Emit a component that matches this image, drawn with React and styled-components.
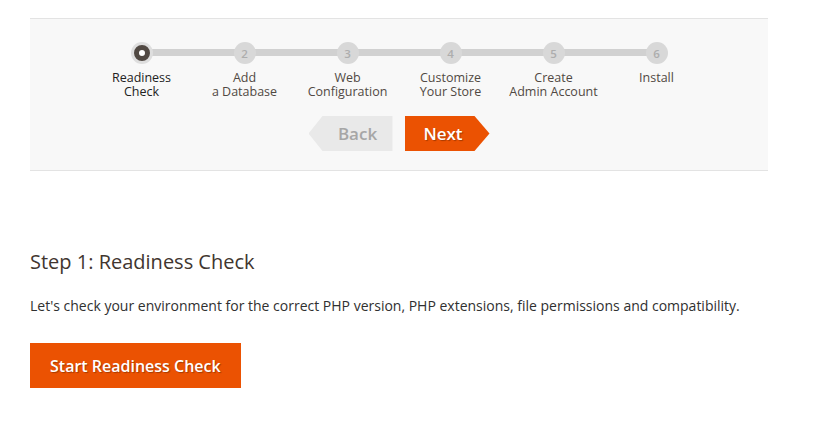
import React from "react";
import styled, { createGlobalStyle } from "styled-components";

const Global = createGlobalStyle`
  html, body { margin: 0; padding: 0; background: #fff; }
  body { font-family: "Open Sans", "Noto Sans", sans-serif; color: #303030; }
`;

const Page = styled.div`
  padding: 18px 30px 0;
  width: 738px;
`;

const Panel = styled.section`
  background: #f8f8f8;
  border-top: 1px solid #e3e3e3;
  border-bottom: 1px solid #e3e3e3;
  padding: 23px 0 19px;
  display: flex;
  flex-direction: column;
  align-items: center;
`;

const Steps = styled.ol`
  list-style: none;
  margin: 0;
  padding: 0;
  display: grid;
  grid-template-columns: repeat(6, 103px);
  position: relative;
  &::before {
    content: "";
    position: absolute;
    left: 51px;
    right: 51px;
    top: 7px;
    height: 7px;
    background: #d1d1d1;
  }
`;

const Step = styled.li`
  display: flex;
  flex-direction: column;
  align-items: center;
  position: relative;
`;

const Dot = styled.span`
  width: 22px;
  height: 22px;
  border-radius: 50%;
  box-sizing: border-box;
  display: flex;
  align-items: center;
  justify-content: center;
  font-size: 11.5px;
  font-weight: 600;
  color: #adadad;
  background: ${(p) => (p.$active ? "#fff" : "#d8d8d8")};
  border: ${(p) => (p.$active ? "5px solid #514943" : "none")};
  box-shadow: ${(p) => (p.$active ? "0 0 0 3px #dedede" : "none")};
  ${(p) => p.$active && "width:16px;height:16px;margin:3px;"}
`;

const Label = styled.span`
  margin-top: 7px;
  font-size: 12.5px;
  line-height: 14px;
  text-align: center;
  color: ${(p) => (p.$active ? "#222" : "#514943")};
  white-space: nowrap;
`;

const Nav = styled.div`
  display: flex;
  gap: 12px;
  margin-top: 17px;
`;

const ArrowButton = styled.button`
  height: 35px;
  border: 0;
  margin: 0;
  font-family: inherit;
  font-size: 17px;
  font-weight: 600;
  box-sizing: border-box;
  cursor: pointer;
  width: ${(p) => (p.$back ? "84px" : "85px")};
  background: ${(p) => (p.$back ? "#e9e9e9" : "#eb5202")};
  color: ${(p) => (p.$back ? "#a6a6a6" : "#fff")};
  text-shadow: ${(p) => (p.$back ? "none" : "1px 1px 1px rgba(0,0,0,0.3)")};
  padding: ${(p) => (p.$back ? "0 0 0 14px" : "0 8px 0 0")};
  clip-path: ${(p) =>
    p.$back
      ? "polygon(14px 0, 100% 0, 100% 100%, 14px 100%, 0 50%)"
      : "polygon(0 0, 70px 0, 100% 50%, 70px 100%, 0 100%)"};
`;

const Content = styled.div`
  padding-top: 79px;
`;

const Heading = styled.h2`
  margin: 0 0 22px;
  font-size: 20px;
  line-height: 24px;
  font-weight: 400;
  color: #41362f;
`;

const Text = styled.p`
  margin: 0 0 27px;
  font-size: 14px;
  line-height: 20px;
  color: #303030;
`;

const Primary = styled.button`
  height: 45px;
  padding: 0 20px;
  border: 0;
  background: #eb5202;
  color: #fff;
  font-family: inherit;
  font-size: 16px;
  font-weight: 600;
  text-shadow: 1px 1px 1px rgba(0,0,0,0.3);
  cursor: pointer;
`;

const steps = [
  ["Readiness", "Check"],
  ["Add", "a Database"],
  ["Web", "Configuration"],
  ["Customize", "Your Store"],
  ["Create", "Admin Account"],
  ["Install"],
];

export default function App() {
  return (
    <Page>
      <Global />
      <Panel>
        <Steps>
          {steps.map((lines, i) => (
            <Step key={i}>
              <Dot $active={i === 0}>{i === 0 ? "" : i + 1}</Dot>
              <Label $active={i === 0}>
                {lines.map((l, j) => (
                  <React.Fragment key={j}>
                    {j > 0 && <br />}
                    {l}
                  </React.Fragment>
                ))}
              </Label>
            </Step>
          ))}
        </Steps>
        <Nav>
          <ArrowButton $back>Back</ArrowButton>
          <ArrowButton>Next</ArrowButton>
        </Nav>
      </Panel>
      <Content>
        <Heading>Step 1: Readiness Check</Heading>
        <Text>
          Let's check your environment for the correct PHP version, PHP extensions, file permissions and compatibility.
        </Text>
        <Primary>Start Readiness Check</Primary>
      </Content>
    </Page>
  );
}
